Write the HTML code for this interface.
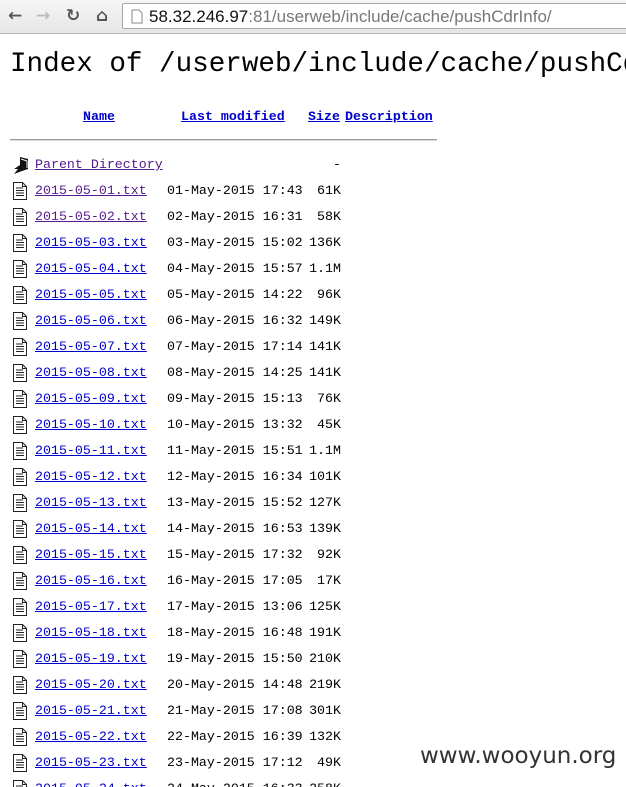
<!DOCTYPE html>
<html><head><meta charset="utf-8"><style>
html,body{margin:0;width:626px;height:787px;overflow:hidden;}
body{background:#fff;position:relative;font-family:"Liberation Mono",monospace;}
#w{position:absolute;left:0;top:0;width:626px;height:787px;overflow:hidden}
.bar{position:absolute;left:0;top:0;width:626px;height:33px;background:linear-gradient(#f6f6f6,#e6e6e6);border-bottom:1px solid #b8b8b8;}
.url{position:absolute;left:122px;top:3px;width:504px;height:26px;background:#fff;border:1px solid #a9a9a9;border-right:none;border-radius:2px 0 0 2px;font-family:"Liberation Sans",sans-serif;font-size:17px;line-height:26px;color:#777;box-sizing:border-box;padding-left:26px;white-space:nowrap;overflow:hidden}
.url b{font-weight:normal;color:#111}
.nav{position:absolute;top:6px;font-family:"DejaVu Sans",sans-serif;font-size:17px;font-weight:bold;color:#555}
h1{position:absolute;left:10px;top:47px;margin:0;font-family:"Liberation Mono",monospace;font-weight:normal;font-size:27.6px;white-space:nowrap;color:#000;line-height:36px}
a{color:#0000cc;text-decoration:underline}
a.v{color:#551a8b}
.t{position:absolute;font-size:13.3px;white-space:nowrap;line-height:16px}
.hdr{font-weight:bold}
.hr{position:absolute;left:10px;top:139px;width:427px;height:0;border-top:1px solid #999;border-bottom:1px solid #ddd}
.ic{position:absolute;left:12px;width:16px;height:20px}
.sz{position:absolute;left:300px;width:41px;text-align:right;font-size:13.3px;line-height:16px}
.wm{position:absolute;left:420px;top:743px;font-family:"DejaVu Sans",sans-serif;font-size:23px;color:#333;white-space:nowrap}
</style></head><body><div id="w">
<div class="bar">
<span class="nav" style="left:8px">&#8592;</span>
<span class="nav" style="left:36px;color:#bbb">&#8594;</span>
<span class="nav" style="left:66px">&#8635;</span>
<span class="nav" style="left:96px">&#8962;</span>
<div class="url"><svg style="position:absolute;left:8px;top:5px" width="12" height="15"><path d="M1 1h7l3 3v10H1z" fill="#fff" stroke="#888"/></svg><b>58.32.246.97</b>:81/userweb/include/cache/pushCdrInfo/</div>
</div>
<h1>Index of /userweb/include/cache/pushCdrInfo</h1>
<div class="t hdr" style="left:83px;top:109px"><a>Name</a></div>
<div class="t hdr" style="left:181px;top:109px"><a>Last modified</a></div>
<div class="t hdr" style="left:308px;top:109px"><a>Size</a></div>
<div class="t hdr" style="left:345px;top:109px"><a>Description</a></div>
<div class="hr"></div>
<svg class="ic" style="top:155px" width="20" height="20"><path d="M8 2l8 2v10l-6 2-8 3 4-5H2l6-4z" fill="#111"/><path d="M9 4l6 2v7" stroke="#fff" fill="none"/></svg>
<div class="t" style="left:35px;top:157px"><a class="v">Parent Directory</a></div>
<div class="t" style="left:333px;top:157px">-</div>
<div id="rows"></div>
<div class="wm">www.wooyun.org</div>
</div>
<script>
var d=[["01","17:43","61K"],["02","16:31","58K"],["03","15:02","136K"],["04","15:57","1.1M"],["05","14:22","96K"],["06","16:32","149K"],["07","17:14","141K"],["08","14:25","141K"],["09","15:13","76K"],["10","13:32","45K"],["11","15:51","1.1M"],["12","16:34","101K"],["13","15:52","127K"],["14","16:53","139K"],["15","17:32","92K"],["16","17:05","17K"],["17","13:06","125K"],["18","16:48","191K"],["19","15:50","210K"],["20","14:48","219K"],["21","17:08","301K"],["22","16:39","132K"],["23","17:12","49K"],["24","16:33","258K"]];
var h="";
d.forEach(function(r,i){var y=183+i*26;
h+='<svg class="ic" style="top:'+(y-2)+'px" width="16" height="20"><path d="M1.5 1.5h9l4 4v13h-13z" fill="#fff" stroke="#222"/><path d="M10.5 1.5v4h4" fill="none" stroke="#222"/><path d="M4 7h7M4 9.5h8M4 12h8M4 14.5h8" stroke="#222"/></svg>';
h+='<div class="t" style="left:35px;top:'+y+'px"><a class="'+(i<2?'v':'')+'">2015-05-'+r[0]+'.txt</a></div>';
h+='<div class="t" style="left:167px;top:'+y+'px">'+r[0]+'-May-2015 '+r[1]+'</div>';
h+='<div class="sz" style="top:'+y+'px">'+r[2]+'</div>';});
document.getElementById("rows").innerHTML=h;
</script>
</body></html>
